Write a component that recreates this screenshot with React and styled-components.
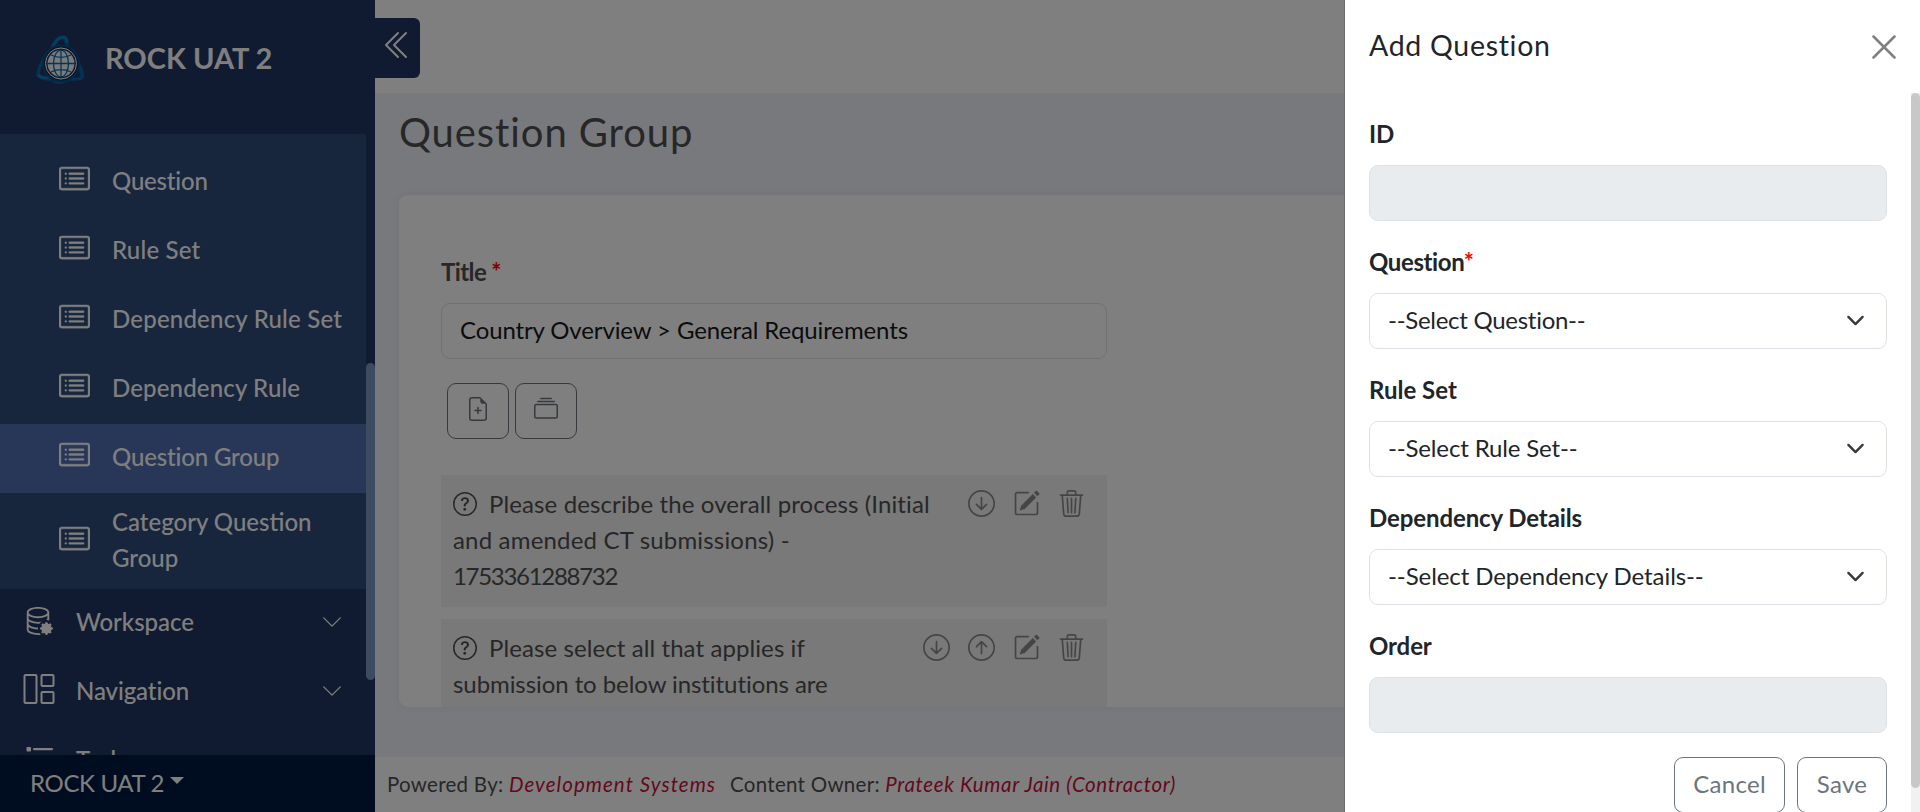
import React from "react";
import styled, { createGlobalStyle } from "styled-components";
import {
  BsCardList,
  BsChevronDoubleLeft,
  BsChevronDown,
  BsDatabaseGear,
  BsFileEarmarkPlus,
  BsCollection,
  BsQuestionCircle,
  BsArrowDownCircle,
  BsArrowUpCircle,
  BsPencilSquare,
  BsTrash3,
} from "react-icons/bs";

const GlobalStyle = createGlobalStyle`
  *, *::before, *::after { box-sizing: border-box; }
  body {
    margin: 0;
    font-family: Lato, "Liberation Sans", sans-serif;
    font-size: 24px;
    line-height: 36px;
    color: #4f4f50;
    background: #f0f2fa;
  }
  h1, h2, p { margin: 0; font-weight: 400; }
  svg { display: block; flex: none; }
`;

const Shell = styled.div`
  display: flex;
  height: 812px;
  overflow: hidden;
  white-space: nowrap;
`;

const Sidebar = styled.aside`
  width: 375px;
  flex: none;
  display: flex;
  flex-direction: column;
  background: #203460;
  color: #fff;
`;

const Brand = styled.div`
  height: 134px;
  flex: none;
  display: flex;
  align-items: flex-start;
  padding: 35px 0 0 35px;
`;

const BrandName = styled.span`
  margin: 5px 0 0 20px;
  font-size: 29px;
  font-weight: 700;
`;

const NavArea = styled.div`
  flex: 1;
  min-height: 0;
  display: flex;
  overflow: hidden;
`;

const NavList = styled.nav`
  width: 366px;
  flex: none;
  font-weight: 500;
`;

const SubMenu = styled.div`
  padding-top: 14px;
  background: #2e4a7a;
`;

const NavItem = styled.div`
  height: ${(p) => (p.$tall ? 96 : 69)}px;
  display: flex;
  align-items: center;
  padding: 0 23px ${(p) => (p.$tall ? 2 : 4)}px ${(p) => (p.$nested ? 59 : 23)}px;
  background: ${(p) => (p.$active ? "#506cae" : "transparent")};
`;

const NavIcon = styled.span`
  width: 53px;
  flex: none;
  padding-bottom: 4px;
`;

const NavLabel = styled.span`
  flex: 1;
  letter-spacing: ${(p) => p.$spacing ?? 0.2}px;
`;

const NavTrack = styled.div`
  width: 9px;
  padding-top: 229px;
`;

const NavThumb = styled.div`
  height: 317px;
  border-radius: 5px;
  background: #7896c0;
`;

const Account = styled.div`
  height: 57px;
  flex: none;
  display: flex;
  align-items: center;
  gap: 6px;
  padding: 0 0 2px 30px;
  background: #001840;
  letter-spacing: -0.35px;
`;

const Caret = styled.span`
  border: 7px solid transparent;
  border-top-color: #fff;
  border-bottom: 0;
  margin-bottom: 4px;
`;

const Main = styled.main`
  flex: 1;
  display: flex;
  flex-direction: column;
  min-width: 0;
`;

const TopBar = styled.header`
  height: 93px;
  flex: none;
  padding-top: 18px;
  background: #fff;
`;

const Collapse = styled.button`
  width: 45px;
  height: 60px;
  padding: 11px 0 0 7px;
  border: 0;
  border-radius: 0 6px 6px 0;
  background: #203460;
  color: #fff;
  display: flex;
  align-items: flex-start;
`;

const Content = styled.section`
  flex: 1;
  min-height: 0;
  padding: 0 24px 50px;
  display: flex;
  flex-direction: column;
`;

const PageTitle = styled.h1`
  height: 102px;
  flex: none;
  padding-top: 13px;
  font-size: 40px;
  line-height: 52px;
  letter-spacing: 0.9px;
`;

const Card = styled.div`
  flex: 1;
  min-height: 0;
  overflow: hidden;
  padding: 60px 42px 0;
  border-radius: 9px;
  background: #fff;
  box-shadow: 0 0 8px rgba(0, 0, 0, 0.06);
`;

const Column = styled.div`
  width: 666px;
`;

const Label = styled.label`
  display: block;
  height: 36px;
  line-height: 34px;
  font-weight: 700;
  margin-bottom: 12px;
  letter-spacing: ${(p) => p.$spacing ?? -0.1}px;
`;

const Required = styled.span`
  color: #f00;
`;

const Field = styled.div`
  height: 56px;
  display: flex;
  align-items: center;
  justify-content: space-between;
  padding: 0 21px 2px 18px;
  border: 1px solid #dee2e6;
  border-radius: 9px;
  background: ${(p) => (p.$disabled ? "#e8ecef" : "#fff")};
  color: #212529;
  letter-spacing: ${(p) => p.$spacing ?? 0}px;
`;

const TitleField = styled(Field)`
  color: #181818;
`;

const Toolbar = styled.div`
  display: flex;
  gap: 6px;
  padding: 24px 6px 36px;
`;

const ToolButton = styled.button`
  width: 62px;
  height: 56px;
  display: flex;
  align-items: flex-start;
  justify-content: center;
  padding: 13px 0 0;
  border: 1px solid #6c757d;
  border-radius: 9px;
  background: transparent;
  color: #6c757d;
`;

const Question = styled.div`
  height: 132px;
  display: flex;
  justify-content: space-between;
  padding: 11px 22.5px 12px 12px;
  margin-bottom: 12px;
  background: #f2f2f2;
`;

const QuestionText = styled.p`
  svg {
    display: inline-block;
    vertical-align: -3px;
    margin-right: 12px;
  }
`;

const TextLine = styled.span`
  display: block;
  letter-spacing: ${(p) => p.$spacing ?? 0}px;
`;

const Actions = styled.div`
  display: flex;
  gap: 18px;
  padding-top: 4px;
  color: #8a8b8d;
`;

const Footer = styled.footer`
  height: 55px;
  flex: none;
  padding: 9px 12px;
  background: #fff;
  font-size: 20.5px;
  letter-spacing: ${(p) => p.$spacing ?? 0}px;
`;

const FooterLink = styled.em`
  color: #c8103c;
  margin-right: 14px;
  letter-spacing: ${(p) => p.$spacing ?? 0}px;
`;

const Backdrop = styled.div`
  position: fixed;
  inset: 0;
  background: rgba(0, 0, 0, 0.5);
`;

const Drawer = styled.div`
  position: fixed;
  top: 0;
  right: 0;
  bottom: 0;
  width: 576px;
  display: flex;
  flex-direction: column;
  border-left: 1px solid #6b6b6b;
  background: #fff;
  color: #212529;
  white-space: nowrap;
`;

const DrawerHeader = styled.div`
  height: 93px;
  flex: none;
  display: flex;
  align-items: flex-start;
  justify-content: space-between;
  padding: 27px 24px 0;
`;

const DrawerTitle = styled.h2`
  font-size: 28.5px;
  letter-spacing: 0.7px;
`;

const CloseIcon = styled.svg`
  margin-top: 8px;
`;

const DrawerBody = styled.div`
  flex: 1;
  min-height: 0;
  display: flex;
  overflow: hidden;
`;

const Form = styled.form`
  flex: 1;
  padding: 24px 24px 0;
`;

const FormGroup = styled.div`
  margin-bottom: 24px;
`;

const DrawerTrack = styled.div`
  width: 9px;
  background: #f1f1f1;
`;

const DrawerThumb = styled.div`
  height: 695px;
  border-radius: 5px;
  background: #c8c8c8;
`;

const ButtonRow = styled.div`
  display: flex;
  justify-content: flex-end;
  gap: 12px;
`;

const Button = styled.button`
  width: ${(p) => p.$width}px;
  height: 56px;
  padding: 0 0 2px;
  border: 1px solid #6c757d;
  border-radius: 9px;
  background: #fff;
  color: #6c757d;
  font: inherit;
  letter-spacing: 0.3px;
`;

function Logo() {
  return (
    <svg width="50" height="50" viewBox="0 0 50 50" fill="none">
      <path d="M15 17C19 7 23 3 27 3c4 0 4 4 6 10 2 4 6 7 9 13 3 5 5 11 5 17" stroke="#0a5c9c" strokeWidth="3.5" />
      <path d="M17 14C20 6 24 2 28 2c3 0 4 3 4 6" stroke="#0a7cc4" strokeWidth="3" />
      <path d="M12 19C8 25 3 33 3 40c3 4 9 4 16 4" stroke="#0a64a8" strokeWidth="3.5" />
      <path d="M3 40c4 4 11 3 16 2" stroke="#0a7cc4" strokeWidth="2.500" />
      <path d="M18 46c6 3 13 1 16-2 5 0 9 1 13-1 1-3 0-8-2-12" stroke="#0a64a8" strokeWidth="3" />
      <circle cx="26" cy="28.500" r="18" stroke="#0b4f87" strokeWidth="2" fill="#14294f" />
      <circle cx="26" cy="28.500" r="15.500" fill="#203460" stroke="#fff" strokeWidth="1" />
      <circle cx="26" cy="28.500" r="13.400" fill="#f4f6fa" />
      <g stroke="#0d6ca8" strokeWidth="1.3">
        <path d="M26 15v27M12.600 28.500h27M16 20c6 3 14 3 20 0M16 37c6-3 14-3 20 0" />
        <ellipse cx="26" cy="28.500" rx="7.500" ry="13.400" />
      </g>
    </svg>
  );
}

function WorkspaceIcon() {
  return (
    <svg width="30" height="30" viewBox="0 0 16 16" fill="#fff">
      <BsDatabaseGear size={16} />
      <circle cx="12.500" cy="12.500" r="2.4" />
    </svg>
  );
}

function LayoutIcon() {
  return (
    <svg width="32" height="32" viewBox="0 0 32 32" fill="none" stroke="#fff" strokeWidth="2">
      <rect x="1.500" y="2" width="12" height="28" rx="1" />
      <rect x="18.500" y="2" width="12" height="11" rx="1" />
      <rect x="18.500" y="19" width="12" height="11" rx="1" />
    </svg>
  );
}

function TaskIcon() {
  return (
    <svg width="32" height="32" viewBox="0 0 32 32" fill="#fff">
      {[5, 16, 27].map((y) => (
        <g key={y}>
          <rect x="3.500" y={y} width="4.500" height="4.500" rx="0.800" />
          <rect x="10" y={y + 1} width="20" height="2.300" rx="1" />
        </g>
      ))}
    </svg>
  );
}

const nested = [
  { label: "Question", spacing: -0.2 },
  { label: "Rule Set", spacing: 0.2 },
  { label: "Dependency Rule Set", spacing: 0.2 },
  { label: "Dependency Rule", spacing: 0.15 },
  { label: "Question Group", active: true, spacing: -0.15 },
];

const SelectField = ({ label, required, text, spacing, labelSpacing }) => (
  <FormGroup>
    <Label $spacing={labelSpacing}>
      {label}
      {required && <Required>*</Required>}
    </Label>
    <Field $spacing={spacing}>
      <span>{text}</span>
      <svg width="19" height="19" viewBox="0 0 16 16" fill="none" stroke="#343a40" strokeWidth="2" strokeLinecap="round" strokeLinejoin="round">
        <path d="m2 5 6 6 6-6" />
      </svg>
    </Field>
  </FormGroup>
);

const DisabledField = ({ label }) => (
  <FormGroup>
    <Label>{label}</Label>
    <Field $disabled />
  </FormGroup>
);

export default function App() {
  return (
    <>
      <GlobalStyle />
      <Shell>
        <Sidebar>
          <Brand>
            <Logo />
            <BrandName>ROCK UAT 2</BrandName>
          </Brand>
          <NavArea>
            <NavList>
              <SubMenu>
                {nested.map((item) => (
                  <NavItem key={item.label} $nested $active={item.active}>
                    <NavIcon>
                      <BsCardList size={31} strokeWidth={0.2} />
                    </NavIcon>
                    <NavLabel $spacing={item.spacing}>{item.label}</NavLabel>
                  </NavItem>
                ))}
                <NavItem $nested $tall>
                  <NavIcon>
                    <BsCardList size={31} strokeWidth={0.2} />
                  </NavIcon>
                  <NavLabel $spacing={0}>
                    Category Question
                    <br />
                    Group
                  </NavLabel>
                </NavItem>
              </SubMenu>
              <NavItem>
                <NavIcon>
                  <WorkspaceIcon />
                </NavIcon>
                <NavLabel $spacing={-0.05}>Workspace</NavLabel>
                <BsChevronDown size={22} />
              </NavItem>
              <NavItem>
                <NavIcon>
                  <LayoutIcon />
                </NavIcon>
                <NavLabel $spacing={-0.1}>Navigation</NavLabel>
                <BsChevronDown size={22} />
              </NavItem>
              <NavItem>
                <NavIcon>
                  <TaskIcon />
                </NavIcon>
                <NavLabel>Tasks</NavLabel>
              </NavItem>
            </NavList>
            <NavTrack>
              <NavThumb />
            </NavTrack>
          </NavArea>
          <Account>
            <span>ROCK UAT 2</span>
            <Caret />
          </Account>
        </Sidebar>
        <Main>
          <TopBar>
            <Collapse>
              <BsChevronDoubleLeft size={32} />
            </Collapse>
          </TopBar>
          <Content>
            <PageTitle>Question Group</PageTitle>
            <Card>
              <Column>
                <Label $spacing={-0.6}>
                  Title <Required>*</Required>
                </Label>
                <TitleField $spacing={-0.12}>Country Overview &gt; General Requirements</TitleField>
                <Toolbar>
                  <ToolButton>
                    <BsFileEarmarkPlus size={24} />
                  </ToolButton>
                  <ToolButton>
                    <BsCollection size={24} />
                  </ToolButton>
                </Toolbar>
                <Question>
                  <QuestionText>
                    <TextLine $spacing={0.12}>
                      <BsQuestionCircle size={24} />
                      Please describe the overall process (Initial
                    </TextLine>
                    <TextLine $spacing={0.18}>and amended CT submissions) -</TextLine>
                    <TextLine $spacing={-1.3}>1753361288732</TextLine>
                  </QuestionText>
                  <Actions>
                    <BsArrowDownCircle size={27} />
                    <BsPencilSquare size={27} />
                    <BsTrash3 size={27} />
                  </Actions>
                </Question>
                <Question>
                  <QuestionText>
                    <TextLine $spacing={0.09}>
                      <BsQuestionCircle size={24} />
                      Please select all that applies if
                    </TextLine>
                    <TextLine $spacing={-0.07}>submission to below institutions are</TextLine>
                  </QuestionText>
                  <Actions>
                    <BsArrowDownCircle size={27} />
                    <BsArrowUpCircle size={27} />
                    <BsPencilSquare size={27} />
                    <BsTrash3 size={27} />
                  </Actions>
                </Question>
              </Column>
            </Card>
          </Content>
          <Footer $spacing={0.28}>
            Powered By: <FooterLink $spacing={1.05}>Development Systems</FooterLink>
            Content Owner: <FooterLink $spacing={0.65}>Prateek Kumar Jain (Contractor)</FooterLink>
          </Footer>
        </Main>
      </Shell>
      <Backdrop />
      <Drawer>
        <DrawerHeader>
          <DrawerTitle>Add Question</DrawerTitle>
          <CloseIcon width="24" height="24" viewBox="0 0 16 16" stroke="#808080" strokeWidth="1.7" strokeLinecap="round">
            <path d="M1 1l14 14M15 1L1 15" />
          </CloseIcon>
        </DrawerHeader>
        <DrawerBody>
          <Form>
            <DisabledField label="ID" />
            <SelectField label="Question" required text="--Select Question--" spacing={-0.28} labelSpacing={-0.4} />
            <SelectField label="Rule Set" text="--Select Rule Set--" spacing={-0.15} labelSpacing={0} />
            <SelectField label="Dependency Details" text="--Select Dependency Details--" spacing={-0.08} />
            <DisabledField label="Order" />
            <ButtonRow>
              <Button type="button" $width={111}>Cancel</Button>
              <Button type="button" $width={90}>Save</Button>
            </ButtonRow>
          </Form>
          <DrawerTrack>
            <DrawerThumb />
          </DrawerTrack>
        </DrawerBody>
      </Drawer>
    </>
  );
}
